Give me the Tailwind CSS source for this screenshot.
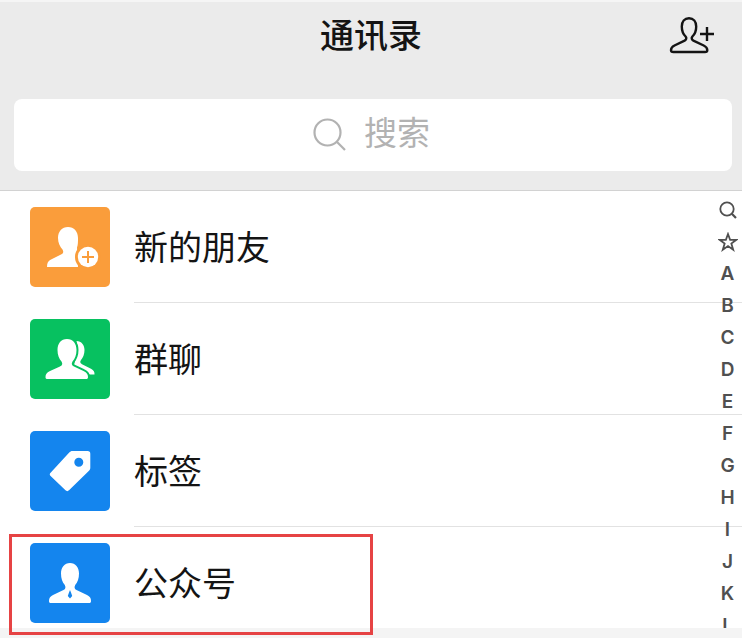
<!DOCTYPE html>
<html lang="zh-CN">
  <head>
    <meta charset="UTF-8" />
    <meta name="viewport" content="width=device-width, initial-scale=1.0" />
    <title>通讯录</title>
    <script src="https://cdn.jsdelivr.net/npm/@tailwindcss/browser@4"></script>
  </head>
  <body class="min-h-screen bg-[#f4f4f4] text-[#141414] font-['Liberation_Sans','Noto_Sans_CJK_SC',sans-serif]">
    <!-- header -->
    <header class="border-t-2 border-t-[#f5f5f5] border-b border-b-[#d2d2d2] bg-[#ebebeb] pb-[19px]">
      <div class="grid grid-cols-3 items-center h-[68px] mb-[29px] px-[27px]">
        <h1 class="col-start-2 text-center text-[34px] leading-[68px] font-medium">通讯录</h1>
        <button type="button" aria-label="添加朋友" class="justify-self-end">
          <svg class="w-[46px] h-10" viewBox="0 0 46 40" fill="none" stroke="#141414" stroke-width="2.4">
            <path
              stroke-linejoin="round"
              d="M20 2.2C15.500 2.200 12.800 5.500 12.800 10.500C12.800 15 14.500 18.500 16.600 20.500C17.800 22 17.400 23.600 15.600 24.600L5.500 29.500C3 30.700 2 32 2 34.200C2 35.500 2.800 36 4.500 36H36C37.700 36 38.300 35.500 38.300 34.200C38.300 32 37.200 30.700 34.700 29.500L24.400 24.600C22.600 23.600 22.200 22 23.400 20.500C25.500 18.500 27.200 15 27.200 10.500C27.200 5.500 24.500 2.200 20 2.200Z"
            />
            <path d="M31 18H45M38 11V25" />
          </svg>
        </button>
      </div>
      <label class="flex items-center justify-center gap-[18px] h-18 ml-3.5 mr-2.5 pr-0.5 pb-0.5 rounded-lg bg-white">
        <svg class="w-[34px] h-[34px]" viewBox="0 0 34 34" fill="none" stroke="#b2b2b2" stroke-width="2.200">
          <circle cx="15.500" cy="15.500" r="13" />
          <path d="M24.800 24.800L33 33" />
        </svg>
        <input
          type="text"
          name="search"
          aria-label="搜索"
          placeholder="搜索"
          class="w-[68px] h-12 text-[33px] outline-none placeholder:text-[#b2b2b2]"
        />
      </label>
    </header>

    <!-- contacts -->
    <main class="relative bg-white">
      <ul class="text-[34px] leading-[114px]">
        <li>
          <a href="#" class="flex pl-[30px] gap-6">
            <svg class="w-20 h-20 my-4 rounded-[5px] bg-[#fa9d3b]" viewBox="0 0 80 80" fill="#fff">
              <path
                d="M38 20C32 20 28 24.500 28 31C28 36 30 39.500 32.500 42.500C34 45 33 46.500 31 47.500L21 52.500C18 54 17 56 17 60H48L47 40.500C48 38 48 35 48 31C48 24.500 44 20 38 20Z"
              />
              <circle cx="58" cy="50" r="13" fill="#fa9d3b" />
              <circle cx="58" cy="50" r="10.200" />
              <path d="M52 50H64M58 44V56" stroke="#fa9d3b" stroke-width="2" />
            </svg>
            <span class="grow h-28 border-b border-[#e2e2e2]">新的朋友</span>
          </a>
        </li>
        <li>
          <a href="#" class="flex pl-[30px] gap-6">
            <svg class="w-20 h-20 my-4 rounded-[5px] bg-[#07c160]" viewBox="0 0 80 80" fill="#fff">
              <path
                d="M46.500 22C51.500 22 54.500 26 54.500 31C54.500 35.500 53 38.500 51 41C49.800 42.700 50 44.200 52 45.200L61 49.800C63.800 51.200 64.700 53 64.500 55.500H58L44 46L48 31Z"
              />
              <path
                stroke="#07c160"
                stroke-width="4"
                paint-order="stroke"
                d="M37 20C31 20 27.500 24.500 27.500 31C27.500 36 29 39.500 31.500 42.500C33 45 32 46.500 30 47.500L20 52C16.500 53.500 15.500 55.500 15.500 58C15.500 59.500 16 60 17.500 60H56C57.500 60 58 59.500 58 58C58 55.500 57 53.500 53.500 52L44 47.500C42 46.500 41 45 42.500 42.500C45 39.500 46.500 36 46.500 31C46.500 24.500 43 20 37 20Z"
              />
            </svg>
            <span class="grow h-28 border-b border-[#e2e2e2]">群聊</span>
          </a>
        </li>
        <li>
          <a href="#" class="flex pl-[30px] gap-6">
            <svg class="w-20 h-20 my-4 rounded-[5px] bg-[#1485ee]" viewBox="0 0 80 80" fill="#fff">
              <path
                fill-rule="evenodd"
                d="M42.500 20H57.500C59.500 20 60.300 20.800 60.300 22.800V36.500C60.300 38 60 38.800 59 39.800L39 59.300C37.800 60.400 36.600 60.400 35.500 59.300L20.600 45C19.500 43.900 19.500 42.800 20.600 41.700L39 21.800C40.200 20.500 41 20 42.500 20ZM48.800 26.700A4.500 4.500 0 1 0 48.800 35.700A4.500 4.500 0 1 0 48.800 26.700Z"
              />
            </svg>
            <span class="grow h-28 border-b border-[#e2e2e2]">标签</span>
          </a>
        </li>
        <li class="relative">
          <a href="#" class="flex pl-[30px] gap-6">
            <svg class="w-20 h-20 mt-4 mb-[5px] rounded-[5px] bg-[#1485ee]" viewBox="0 0 80 80" fill="#fff">
              <path
                d="M40 20C34.500 20 31 24.500 31 30.500C31 35.500 32.300 39 34.800 42C36 44.500 35.500 46 33.500 47L23 52C20 53.500 19 55 19 58C19 59.500 19.500 60 21 60H59C60.500 60 61 59.500 61 58C61 55 60 53.500 57 52L46.500 47C44.500 46 44 44.500 45.200 42C47.700 39 49 35.500 49 30.500C49 24.500 45.500 20 40 20Z"
              />
              <path d="M40 47L41 49.500L42.200 53L40 55.500L37.800 53L39 49.500Z" fill="#1485ee" />
            </svg>
            <span class="h-[101px]">公众号</span>
          </a>
          <!-- highlight frame -->
          <div class="absolute top-[7px] left-[9px] w-[364px] h-[101px] border-3 border-[#e64344] pointer-events-none"></div>
        </li>
      </ul>

      <!-- letter index -->
      <nav
        aria-label="索引"
        class="absolute inset-y-0 right-0 flex flex-col w-[29px] pt-[3px] overflow-hidden text-center text-[19px] leading-8 font-semibold text-[#505050] font-[Inter,'Liberation_Sans',sans-serif]"
      >
        <a href="#" aria-label="搜索" class="flex shrink-0 items-center justify-center h-8">
          <svg class="w-[18px] h-[18px]" viewBox="0 0 18 18" fill="none" stroke="#505050" stroke-width="1.800">
            <circle cx="8" cy="8" r="6.700" />
            <path d="M12.800 12.800L17 17" stroke-width="2.200" />
          </svg>
        </a>
        <a href="#" aria-label="星标朋友" class="flex shrink-0 items-center justify-center h-8">
          <svg class="w-5 h-5" viewBox="0 0 18 18" fill="none" stroke="#505050" stroke-width="1.600">
            <path d="M9 1.800L10.900 7H16.500L12 10.400L13.700 16L9 12.700L4.300 16L6 10.400L1.500 7H7.100Z" />
          </svg>
        </a>
        <a href="#">A</a>
        <a href="#">B</a>
        <a href="#">C</a>
        <a href="#">D</a>
        <a href="#">E</a>
        <a href="#">F</a>
        <a href="#">G</a>
        <a href="#">H</a>
        <a href="#">I</a>
        <a href="#">J</a>
        <a href="#">K</a>
        <a href="#">L</a>
      </nav>
    </main>
  </body>
</html>
